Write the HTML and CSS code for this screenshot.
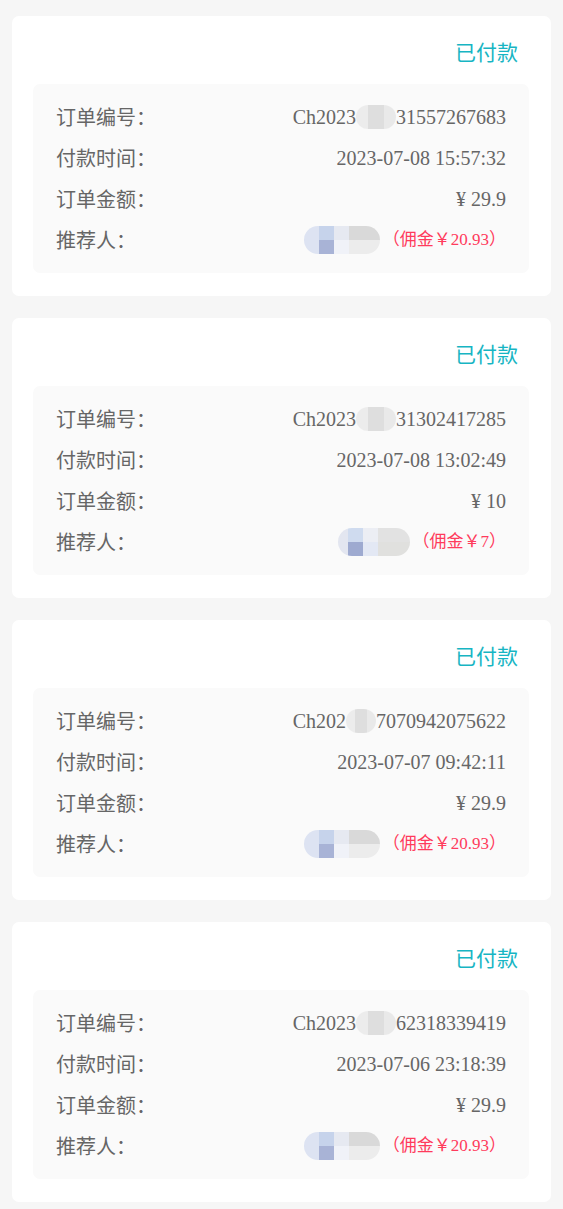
FILE: index.html
```html
<!DOCTYPE html>
<html lang="zh-CN">

<head>
  <meta charset="UTF-8" />
  <meta name="viewport" content="width=device-width, initial-scale=1.0" />
  <title>我的订单</title>
  <link rel="stylesheet" href="styles.css">
</head>

<body>
  <div class="order-list">

    <!-- Order 1 -->
    <div class="order-card">
      <div class="order-status">已付款</div>
      <div class="order-info">
        <div class="info-row">
          <span class="info-label">订单编号：</span>
          <span class="info-value">Ch2023<span class="mask">0708</span>31557267683</span>
        </div>
        <div class="info-row">
          <span class="info-label">付款时间：</span>
          <span class="info-value">2023-07-08 15:57:32</span>
        </div>
        <div class="info-row">
          <span class="info-label">订单金额：</span>
          <span class="info-value">¥ 29.9</span>
        </div>
        <div class="info-row">
          <span class="info-label">推荐人：</span>
          <span class="info-value">
            <span class="name-blur"></span>
            <span class="commission">（佣金￥20.93）</span>
          </span>
        </div>
      </div>
    </div>

    <!-- Order 2 -->
    <div class="order-card">
      <div class="order-status">已付款</div>
      <div class="order-info">
        <div class="info-row">
          <span class="info-label">订单编号：</span>
          <span class="info-value">Ch2023<span class="mask">0708</span>31302417285</span>
        </div>
        <div class="info-row">
          <span class="info-label">付款时间：</span>
          <span class="info-value">2023-07-08 13:02:49</span>
        </div>
        <div class="info-row">
          <span class="info-label">订单金额：</span>
          <span class="info-value">¥ 10</span>
        </div>
        <div class="info-row">
          <span class="info-label">推荐人：</span>
          <span class="info-value">
            <span class="name-blur name-blur-alt"></span>
            <span class="commission">（佣金￥7）</span>
          </span>
        </div>
      </div>
    </div>

    <!-- Order 3 -->
    <div class="order-card">
      <div class="order-status">已付款</div>
      <div class="order-info">
        <div class="info-row">
          <span class="info-label">订单编号：</span>
          <span class="info-value">Ch202<span class="mask">307</span>7070942075622</span>
        </div>
        <div class="info-row">
          <span class="info-label">付款时间：</span>
          <span class="info-value">2023-07-07 09:42:11</span>
        </div>
        <div class="info-row">
          <span class="info-label">订单金额：</span>
          <span class="info-value">¥ 29.9</span>
        </div>
        <div class="info-row">
          <span class="info-label">推荐人：</span>
          <span class="info-value">
            <span class="name-blur"></span>
            <span class="commission">（佣金￥20.93）</span>
          </span>
        </div>
      </div>
    </div>

    <!-- Order 4 -->
    <div class="order-card">
      <div class="order-status">已付款</div>
      <div class="order-info">
        <div class="info-row">
          <span class="info-label">订单编号：</span>
          <span class="info-value">Ch2023<span class="mask">0706</span>62318339419</span>
        </div>
        <div class="info-row">
          <span class="info-label">付款时间：</span>
          <span class="info-value">2023-07-06 23:18:39</span>
        </div>
        <div class="info-row">
          <span class="info-label">订单金额：</span>
          <span class="info-value">¥ 29.9</span>
        </div>
        <div class="info-row">
          <span class="info-label">推荐人：</span>
          <span class="info-value">
            <span class="name-blur"></span>
            <span class="commission">（佣金￥20.93）</span>
          </span>
        </div>
      </div>
    </div>

  </div>
</body>

</html>
```

FILE: styles.css
```css
/* Page */
body {
  margin: 0;
  background-color: #f6f6f6;
  font-family: 'Liberation Serif', 'Noto Sans CJK SC', serif;
  color: #666;
}

.order-list {
  padding: 16px 12px 8px;
}

/* Order card */
.order-card {
  background-color: #fff;
  border-radius: 7px;
  padding: 15px 22px 23px 21px;
  margin-bottom: 22px;
}

.order-status {
  text-align: right;
  font-family: 'Noto Sans CJK SC', sans-serif;
  font-size: 21px;
  line-height: 40px;
  color: #17b5c3;
  margin-bottom: 13px;
  padding-right: 11px;
}

/* Info box */
.order-info {
  background-color: #fafafa;
  border-radius: 7px;
  padding: 12px 23px 13px;
}

.info-row {
  display: flex;
  justify-content: space-between;
  align-items: center;
  height: 41px;
}

.info-label {
  font-family: 'Noto Sans CJK SC', sans-serif;
  font-size: 20px;
  line-height: 24px;
  color: #666;
}

.info-value {
  display: flex;
  align-items: center;
  font-size: 20px;
  line-height: 24px;
  color: #666;
  white-space: nowrap;
}

/* Blurred parts of the order number */
.mask {
  display: inline-block;
  color: transparent;
  height: 24px;
  border-radius: 12px;
  background: linear-gradient(to right, #ececec 0 30%, #dedede 30% 70%, #e9e9e9 70% 100%);
  filter: blur(0.6px);
}

/* Blurred referrer name */
.name-blur {
  display: inline-block;
  width: 76px;
  height: 28px;
  border-radius: 14px;
  background:
    linear-gradient(to right, #dde3f2 0 15px, #c6d3eb 15px 30px, #e6e9f1 30px 45px, #d9d9d9 45px 100%) top / 100% 50% no-repeat,
    linear-gradient(to right, #dde3f2 0 15px, #a8b3d6 15px 30px, #f0f2f8 30px 45px, #ececec 45px 100%) bottom / 100% 50% no-repeat;
  filter: blur(0.6px);
}

.name-blur-alt {
  width: 72px;
  background:
    linear-gradient(to right, #e3e6f0 0 10px, #cfdbef 10px 25px, #eceef4 25px 40px, #e2e2e2 40px 100%) top / 100% 50% no-repeat,
    linear-gradient(to right, #e3e6f0 0 10px, #9eaad0 10px 25px, #e3e8f4 25px 40px, #e0e0de 40px 100%) bottom / 100% 50% no-repeat;
}

.commission {
  font-size: 17px;
  color: #ff3b5c;
  margin-left: 3px;
}
```
